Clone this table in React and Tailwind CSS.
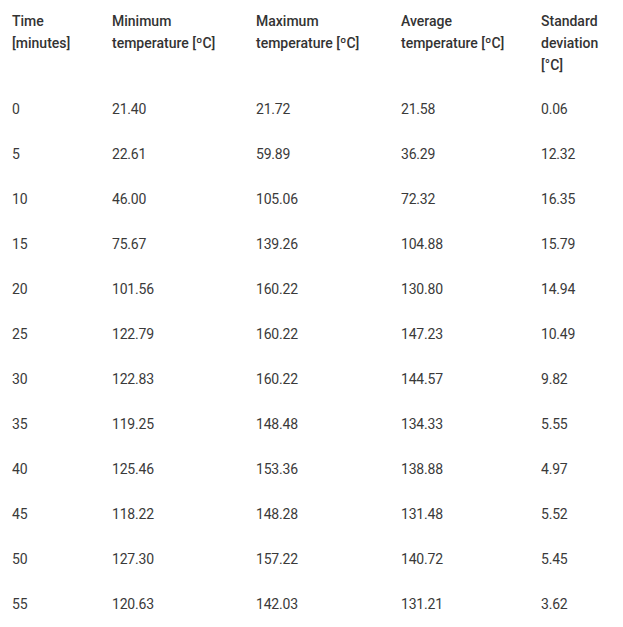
import React from "react";

const rows = [
  ["0", "21.40", "21.72", "21.58", "0.06"],
  ["5", "22.61", "59.89", "36.29", "12.32"],
  ["10", "46.00", "105.06", "72.32", "16.35"],
  ["15", "75.67", "139.26", "104.88", "15.79"],
  ["20", "101.56", "160.22", "130.80", "14.94"],
  ["25", "122.79", "160.22", "147.23", "10.49"],
  ["30", "122.83", "160.22", "144.57", "9.82"],
  ["35", "119.25", "148.48", "134.33", "5.55"],
  ["40", "125.46", "153.36", "138.88", "4.97"],
  ["45", "118.22", "148.28", "131.48", "5.52"],
  ["50", "127.30", "157.22", "140.72", "5.45"],
  ["55", "120.63", "142.03", "131.21", "3.62"],
];

export default function App() {
  return (
    <div className="w-[623px] h-[627px] bg-white text-[#3a3a3a]" style={{ fontFamily: "Roboto, sans-serif" }}>
      <table className="w-[623px] border-collapse table-fixed text-[14px] tracking-[-0.2px]">
        <colgroup>
          <col className="w-[100px]" />
          <col className="w-[144px]" />
          <col className="w-[145px]" />
          <col className="w-[140px]" />
          <col />
        </colgroup>
        <thead>
          <tr className="align-top font-medium text-[#333]">
            <th className="pl-3 pt-[10px] pb-[10px] text-left font-medium leading-[22px] tracking-normal">Time<br />[minutes]</th>
            <th className="pl-3 pt-[10px] pb-[10px] text-left font-medium leading-[22px] tracking-normal">Minimum<br />temperature [ºC]</th>
            <th className="pl-3 pt-[10px] pb-[10px] text-left font-medium leading-[22px] tracking-normal">Maximum<br />temperature [ºC]</th>
            <th className="pl-3 pt-[10px] pb-[10px] text-left font-medium leading-[22px] tracking-normal">Average<br />temperature [ºC]</th>
            <th className="pl-3 pt-[10px] pb-[10px] text-left font-medium leading-[22px] tracking-normal">Standard<br />deviation<br />[°C]</th>
          </tr>
        </thead>
        <tbody>
          {rows.map((r) => (
            <tr key={r[0]} className="h-[45px]">
              {r.map((c, i) => (
                <td key={i} className="pl-3 align-middle leading-[22px]">{c}</td>
              ))}
            </tr>
          ))}
        </tbody>
      </table>
    </div>
  );
}
